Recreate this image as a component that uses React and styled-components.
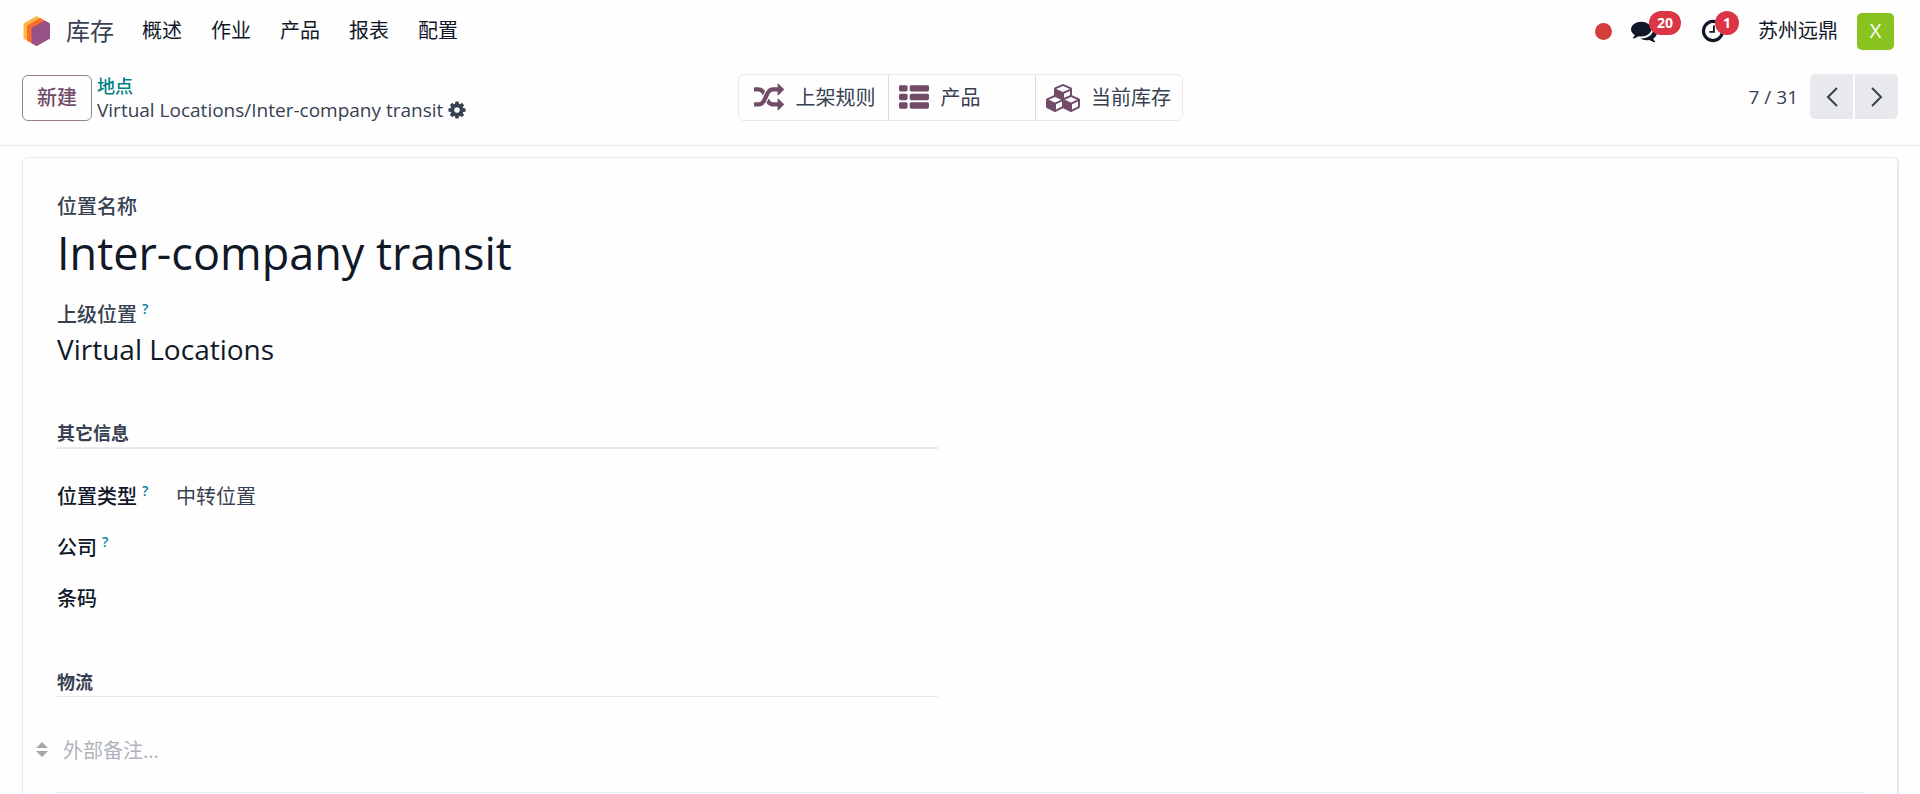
import { useState } from 'react'
import styled, { createGlobalStyle, css } from 'styled-components'

const GlobalStyle = createGlobalStyle`
    :root {
        --page: #fefefe;
        --border: #e7e9ed;
        --text: #374151;
        --strong: #111827;
        --brand: #714b67;
        --link: #017e84;
        --danger: #dc3545;
    }
    *, *::before, *::after {
        box-sizing: border-box;
    }
    body {
        margin: 0;
        background-color: var(--page);
        color: var(--text);
        font-family: "Open Sans", "Noto Sans CJK SC", sans-serif;
        font-size: 20px;
        line-height: 28px;
    }
    button, input, select, textarea {
        font: inherit;
        color: inherit;
        margin: 0;
    }
    button {
        cursor: pointer;
    }
    a {
        color: inherit;
        text-decoration: none;
    }
`

const Page = styled.div`
    min-height: 100vh;
    display: flex;
    flex-direction: column;
    overflow: hidden;
`

const Navbar = styled.header`
    display: flex;
    align-items: center;
    justify-content: space-between;
    height: 62px;
    padding: 0 26px 0 22px;
    color: var(--strong);
`

const NavGroup = styled.div`
    display: flex;
    align-items: center;
`

const AppLink = styled.a`
    display: flex;
    align-items: center;
    gap: 14px;
    margin-right: 28px;
    font-size: 24px;
    color: var(--text);
`

const Menu = styled.nav`
    display: flex;
    gap: 29px;
`

const MenuLink = styled.a`
    display: block;
`

const Recording = styled.span`
    width: 17px;
    height: 17px;
    border-radius: 50%;
    background-color: #d23f3a;
    margin-right: 19px;
`

const SystrayButton = styled.button`
    position: relative;
    display: flex;
    padding: 0;
    border: 0;
    background: none;
    margin-right: ${(props) => props.$space}px;
`

const Badge = styled.span`
    position: absolute;
    left: ${(props) => props.$left}px;
    top: -7px;
    height: 24px;
    padding: 0 8px;
    border-radius: 12px;
    background-color: var(--danger);
    color: #fff;
    font-size: 14px;
    font-weight: 700;
    line-height: 24px;
`

const Avatar = styled.button`
    width: 37px;
    height: 37px;
    margin-left: 19px;
    padding: 0;
    border: 0;
    border-radius: 5px;
    background-color: #88c31f;
    color: #fff;
`

const ControlPanel = styled.section`
    display: grid;
    grid-template-columns: 1fr auto 1fr;
    align-items: start;
    height: 84px;
    padding: 12px 22px 0;
    border-bottom: 1px solid var(--border);
`

const PanelLeft = styled.div`
    display: flex;
    align-items: center;
    gap: 5px;
`

const NewButton = styled.button`
    height: 46px;
    padding: 0 14px;
    border: 1px solid #9a7f93;
    border-radius: 6px;
    background-color: transparent;
    color: var(--brand);
    font-weight: 500;
`

const Breadcrumb = styled.div`
    display: flex;
    flex-direction: column;
    font-size: 18px;
    line-height: 24px;
`

const BackLink = styled.a`
    font-weight: 500;
    color: var(--link);
`

const Current = styled.span`
    display: flex;
    align-items: center;
    gap: 4px;
    font-size: 19px;
`

const IconButton = styled.button`
    display: flex;
    padding: 0;
    border: 0;
    background: none;
`

const StatButtons = styled.div`
    display: flex;
    border: 1px solid var(--border);
    border-radius: 6px;
`

const StatButton = styled.button`
    display: flex;
    align-items: center;
    justify-content: ${(props) => (props.$start ? 'flex-start' : 'center')};
    gap: 9px;
    min-width: 147px;
    height: 45px;
    padding: 0 ${(props) => (props.$start ? 7 : 10)}px;
    border: 0;
    background: none;
    & + & {
        border-left: 1px solid #d8dadd;
    }
    &:first-child {
        padding: 0 12px;
    }
`

const StatIcon = styled.span`
    display: flex;
    justify-content: center;
    width: 36px;
    color: var(--brand);
`

const Pager = styled.div`
    display: flex;
    align-items: center;
    justify-content: flex-end;
    gap: 12px;
    font-size: 19px;
`

const PagerButtons = styled.div`
    display: flex;
    gap: 2px;
`

const PagerButton = styled.button`
    display: flex;
    align-items: center;
    justify-content: center;
    width: 43px;
    height: 45px;
    padding: 0;
    border: 0;
    background-color: #e7e9ed;
    border-radius: ${(props) => (props.$side === 'left' ? '5px 0 0 5px' : '0 5px 5px 0')};
`

const Sheet = styled.main`
    flex: 1;
    margin: 11px 21px 0 22px;
    padding: 35px 34px 0;
    border: solid var(--border);
    border-width: 1px 2px 0 1px;
    border-radius: 6px 6px 0 0;
`

const TitleBlock = styled.div`
    display: flex;
    flex-direction: column;
    align-items: flex-start;
`

const Label = styled.label`
    font-weight: 500;
    color: ${(props) => (props.$strong ? 'var(--strong)' : 'var(--text)')};
`

const Help = styled.sup`
    margin-left: 5px;
    font-size: 14px;
    font-weight: 600;
    line-height: 0;
    color: #01829b;
`

const bareField = css`
    display: block;
    width: 100%;
    padding: 0;
    border: 0;
    outline: 0;
    background: none;
    resize: none;
    appearance: none;
`

const NameField = styled.textarea`
    ${bareField}
    height: 60px;
    margin-bottom: 20px;
    overflow: hidden;
    font-size: 45px;
    line-height: 64px;
    color: var(--strong);
`

const ParentField = styled.input`
    ${bareField}
    height: 40px;
    font-size: 28px;
    color: var(--strong);
`

const Group = styled.section`
    width: calc(50% - 22px);
    margin-top: ${(props) => props.$top}px;
`

const GroupTitle = styled.h2`
    margin: 0 0 22px;
    padding-bottom: 0;
    border-bottom: ${(props) => props.$line}px solid var(--border);
    font-size: 18px;
    font-weight: 700;
    line-height: 28px;
`

const FieldRow = styled.div`
    display: grid;
    grid-template-columns: 119px 1fr;
    align-items: center;
    height: 51px;
`

const TextField = styled.input`
    ${bareField}
`

const SelectField = styled.select`
    ${bareField}
`

const NoteRow = styled.div`
    position: relative;
    margin-top: 32px;
    padding: 8px 6px;
    height: 64px;
    border-bottom: 1px solid var(--border);
`

const NoteHandle = styled.span`
    position: absolute;
    left: -21px;
    top: 13px;
    display: flex;
`

const NoteField = styled.textarea`
    ${bareField}
    height: 28px;
    &::placeholder {
        color: #b0b4bb;
        opacity: 1;
    }
`

const Glyph = ({ size, width = 1792, d }) => (
    <svg
        width={Math.round((size * width) / 1792)}
        height={size}
        viewBox={`0 0 ${width} 1792`}
        fill="currentColor"
        aria-hidden="true"
    >
        <path d={d} />
    </svg>
)

const ICONS = {
    random: 'M666 481q-60 92-137 273-22-45-37-72.5t-40.5-63.5-51-56.5-63-35-81.5-14.5h-224q-14 0-23-9t-9-23v-192q0-14 9-23t23-9h224q250 0 410 225zm1126 799q0 14-9 23l-320 320q-9 9-23 9-13 0-22.5-9.5t-9.5-22.5v-192q-32 0-85 .5t-81 1-73-1-71-5-64-10.5-63-18.5-58-28.5-59-40-55-53.5-56-69.5q59-93 136-273 22 45 37 72.5t40.5 63.5 51 56.5 63 35 81.5 14.5h256v-192q0-14 9-23t23-9q12 0 24 10l319 319q9 9 9 23zm0-896q0 14-9 23l-320 320q-9 9-23 9-13 0-22.5-9.5t-9.5-22.5v-192h-256q-48 0-87 15t-69 45-51 61.5-45 77.5q-32 62-78 171-29 66-49.5 111t-54 105-64 100-74 83-90 68.5-106.5 42-128 16.5h-224q-14 0-23-9t-9-23v-192q0-14 9-23t23-9h224q48 0 87-15t69-45 51-61.5 45-77.5q32-62 78-171 29-66 49.5-111t54-105 64-100 74-83 90-68.5 106.5-42 128-16.5h256v-192q0-14 9-23t23-9q12 0 24 10l319 319q9 9 9 23z',
    list: 'M512 1248v192q0 40-28 68t-68 28h-320q-40 0-68-28t-28-68v-192q0-40 28-68t68-28h320q40 0 68 28t28 68zm0-512v192q0 40-28 68t-68 28h-320q-40 0-68-28t-28-68v-192q0-40 28-68t68-28h320q40 0 68 28t28 68zm1280 512v192q0 40-28 68t-68 28h-960q-40 0-68-28t-28-68v-192q0-40 28-68t68-28h960q40 0 68 28t28 68zm-1280-1024v192q0 40-28 68t-68 28h-320q-40 0-68-28t-28-68v-192q0-40 28-68t68-28h320q40 0 68 28t28 68zm1280 512v192q0 40-28 68t-68 28h-960q-40 0-68-28t-28-68v-192q0-40 28-68t68-28h960q40 0 68 28t28 68zm0-512v192q0 40-28 68t-68 28h-960q-40 0-68-28t-28-68v-192q0-40 28-68t68-28h960q40 0 68 28t28 68z',
    cubes: 'M640 1632l384-192v-314l-384 164v342zm-64-454l404-173-404-173-404 173zm1088 454l384-192v-314l-384 164v342zm-64-454l404-173-404-173-404 173zm-448-293l384-165v-266l-384 164v267zm-64-379l441-189-441-189-441 189zm1088 518v416q0 36-19 67t-52 47l-448 224q-25 14-57 14t-57-14l-448-224q-4-2-7-4-2 2-7 4l-448 224q-25 14-57 14t-57-14l-448-224q-33-16-52-47t-19-67v-416q0-38 21.5-70t56.5-48l434-186v-400q0-38 21.5-70t56.5-48l448-192q23-10 50-10t50 10l448 192q35 16 56.5 48t21.5 70v400l434 186q36 16 57 48t21 70z',
    cog: 'M1152 896q0-106-75-181t-181-75-181 75-75 181 75 181 181 75 181-75 75-181zm512-109v222q0 12-8 23t-20 13l-185 28q-19 54-39 91 35 50 107 138 10 12 10 25t-9 23q-27 37-99 108t-94 71q-12 0-26-9l-138-108q-44 23-91 38-16 136-29 186-7 28-36 28h-222q-14 0-24.5-8.5t-11.5-21.5l-28-184q-49-16-90-37l-141 107q-10 9-25 9-14 0-25-11-126-114-165-168-7-10-7-23 0-12 8-23 15-21 51-66.5t54-70.5q-27-50-41-99l-183-27q-13-2-21-12.5t-8-23.5v-222q0-12 8-23t19-13l186-28q14-46 39-92-40-57-107-138-10-12-10-24 0-10 9-23 26-36 98.5-107.5t94.5-71.5q13 0 26 10l138 107q44-23 91-38 16-136 29-186 7-28 36-28h222q14 0 24.5 8.5t11.5 21.5l28 184q49 16 90 37l142-107q9-9 24-9 13 0 25 10 129 119 165 170 7 8 7 22 0 12-8 23-15 21-51 66.5t-54 70.5q26 50 41 98l183 28q13 2 21 12.5t8 23.5z',
    comments: 'M1408 768q0 139-94 257t-256.5 186.5-353.5 68.5q-86 0-176-16-124 88-278 128-36 9-86 16h-3q-11 0-20.5-8t-11.5-21q-1-3-1-6.5t.5-6.5 2-6l2.5-5 3.5-5.5 4-5 4.5-5 4-4.5q5-6 23-25t26-29.5 22.5-29 25-38.5 20.5-44q-124-72-195-177t-71-224q0-139 94-257t256.5-186.5 353.5-68.5 353.5 68.5 256.5 186.5 94 257zm384 256q0 120-71 224.5t-195 176.5q10 24 20.5 44t25 38.5 22.5 29 26 29.5 23 25q1 1 4 4.5t4.5 5 4 5 3.5 5.5l2.5 5 2 6 .5 6.5-1 6.5q-3 14-13 22t-22 7q-50-7-86-16-154-40-278-128-90 16-176 16-271 0-472-132 58 4 88 4 161 0 309-45t264-129q125-92 192-212t67-254q0-77-23-152 129 71 204 178t75 230z',
    clock: 'M1024 544v448q0 14-9 23t-23 9h-320q-14 0-23-9t-9-23v-64q0-14 9-23t23-9h224v-352q0-14 9-23t23-9h64q14 0 23 9t9 23zm416 352q0-148-73-273t-198-198-273-73-273 73-198 198-73 273 73 273 198 198 273 73 273-73 198-198 73-273zm224 0q0 209-103 385.5t-279.5 279.5-385.5 103-385.5-103-279.5-279.5-103-385.5 103-385.5 279.5-279.5 385.5-103 385.5 103 279.5 279.5 103 385.5z',
}

const Logo = () => (
    <svg width="30" height="32" viewBox="0 0 30 32" aria-hidden="true">
        <path d="M14.5 1 L27.5 8.5 V23.5 L14.5 31 L1.5 23.5 V8.5 Z" fill="#fbb945" />
        <path d="M18 3 L27.5 8.5 V23.5 L14.5 31 L5 25.5 V10.5 Z" fill="#fc6d2b" />
        <path d="M23 5.5 L28 8.5 V23.5 L14.5 31 L9.5 28 V13 Z" fill="#985184" />
    </svg>
)

const Chevron = ({ d }) => (
    <svg width="12" height="20" viewBox="0 0 12 20" fill="none" stroke="currentColor" strokeWidth="2" aria-hidden="true">
        <path d={d} />
    </svg>
)

const menus = ['概述', '作业', '产品', '报表', '配置']

const App = () => {
    const [location, setLocation] = useState({
        name: 'Inter-company transit',
        parent: 'Virtual Locations',
        company: '',
        barcode: '',
        note: '',
    })

    const update = (e) => setLocation({ ...location, [e.target.name]: e.target.value })

    return (
        <Page>
            <GlobalStyle />
            <Navbar>
                <NavGroup>
                    <AppLink href="#inventory"><Logo />库存</AppLink>
                    <Menu>
                        {menus.map((menu) => (
                            <MenuLink key={menu} href="#menu">{menu}</MenuLink>
                        ))}
                    </Menu>
                </NavGroup>
                <NavGroup>
                    <Recording />
                    <SystrayButton $space={43} aria-label="消息">
                        <Glyph size={26} d={ICONS.comments} />
                        <Badge $left={18}>20</Badge>
                    </SystrayButton>
                    <SystrayButton $space={32} aria-label="活动">
                        <Glyph size={26} d={ICONS.clock} />
                        <Badge $left={15}>1</Badge>
                    </SystrayButton>
                    <span>苏州远鼎</span>
                    <Avatar>X</Avatar>
                </NavGroup>
            </Navbar>

            <ControlPanel>
                <PanelLeft>
                    <NewButton>新建</NewButton>
                    <Breadcrumb>
                        <BackLink href="#locations">地点</BackLink>
                        <Current>
                            Virtual Locations/Inter-company transit
                            <IconButton aria-label="设置"><Glyph size={20} d={ICONS.cog} /></IconButton>
                        </Current>
                    </Breadcrumb>
                </PanelLeft>
                <StatButtons>
                    <StatButton>
                        <StatIcon><Glyph size={30} d={ICONS.random} /></StatIcon>
                        上架规则
                    </StatButton>
                    <StatButton $start>
                        <StatIcon><Glyph size={30} d={ICONS.list} /></StatIcon>
                        产品
                    </StatButton>
                    <StatButton>
                        <StatIcon><Glyph size={28} width={2304} d={ICONS.cubes} /></StatIcon>
                        当前库存
                    </StatButton>
                </StatButtons>
                <Pager>
                    <span>7 / 31</span>
                    <PagerButtons>
                        <PagerButton $side="left" aria-label="上一页"><Chevron d="M11 1 L2 10 L11 19" /></PagerButton>
                        <PagerButton $side="right" aria-label="下一页"><Chevron d="M1 1 L10 10 L1 19" /></PagerButton>
                    </PagerButtons>
                </Pager>
            </ControlPanel>

            <Sheet>
                <TitleBlock>
                    <Label htmlFor="name">位置名称</Label>
                    <NameField id="name" name="name" rows={1} spellCheck={false} value={location.name} onChange={update} />
                    <Label htmlFor="parent">上级位置<Help>?</Help></Label>
                    <ParentField id="parent" name="parent" spellCheck={false} value={location.parent} onChange={update} />
                </TitleBlock>

                <Group $top={50}>
                    <GroupTitle $line={2}>其它信息</GroupTitle>
                    <FieldRow>
                        <Label $strong htmlFor="type">位置类型<Help>?</Help></Label>
                        <SelectField id="type" defaultValue="transit">
                            <option value="transit">中转位置</option>
                        </SelectField>
                    </FieldRow>
                    <FieldRow>
                        <Label $strong htmlFor="company">公司<Help>?</Help></Label>
                        <TextField id="company" name="company" value={location.company} onChange={update} />
                    </FieldRow>
                    <FieldRow>
                        <Label $strong htmlFor="barcode">条码</Label>
                        <TextField id="barcode" name="barcode" value={location.barcode} onChange={update} />
                    </FieldRow>
                </Group>

                <Group $top={44}>
                    <GroupTitle $line={1}>物流</GroupTitle>
                </Group>

                <NoteRow>
                    <NoteHandle>
                        <svg width="12" height="16" viewBox="0 0 12 16" fill="#a5a7ad" aria-hidden="true">
                            <path d="M6 0 L12 6 H0 Z M0 9 H12 L6 15 Z" />
                        </svg>
                    </NoteHandle>
                    <NoteField name="note" aria-label="外部备注" placeholder="外部备注..." value={location.note} onChange={update} />
                </NoteRow>
            </Sheet>
        </Page>
    )
}

export default App
